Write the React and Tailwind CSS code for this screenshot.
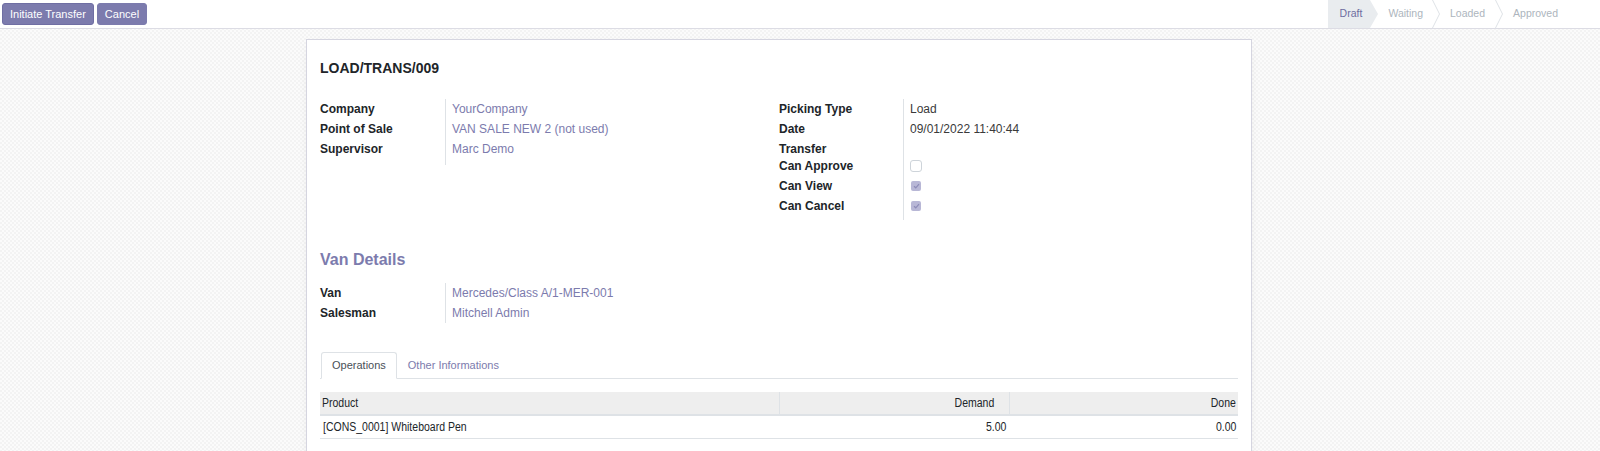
import React from "react";

const purple = "text-[#7c7bad]";

function Field({ label, children, h = "h-[20px]", labelW = "w-[125px]" }) {
  return (
    <div className={`flex ${h}`}>
      <div className={`${labelW} shrink-0 font-bold text-[12px] leading-[20px] text-[#212529]`}>{label}</div>
      <div className="pl-[6px] text-[12px] leading-[20px] border-l border-[#dee2e6] flex-1">{children}</div>
    </div>
  );
}

function CheckBox({ checked }) {
  if (!checked) {
    return <div className="mt-[4px] w-[12px] h-[12px] rounded-[3px] border border-[#ced4da] bg-white" />;
  }
  return (
    <div className="mt-[5px] ml-[1px] w-[10px] h-[10px] rounded-[2px] bg-[#b8b7d6] flex items-center justify-center">
      <svg width="7" height="6" viewBox="0 0 7 6">
        <path d="M1 3.2 L2.8 4.8 L6 1.2" fill="none" stroke="#8d8cb8" strokeWidth="1.2" />
      </svg>
    </div>
  );
}

function Narrow({ children, right }) {
  return (
    <span className={`inline-block scale-x-[0.84] ${right ? "origin-right" : "origin-left"}`}>{children}</span>
  );
}

function Chevron() {
  return (
    <svg className="shrink-0" width="8" height="28" viewBox="0 0 8 28">
      <path d="M0.5 0 L7.5 14 L0.5 28" fill="none" stroke="#dee2e6" />
    </svg>
  );
}

export default function App() {
  return (
    <div
      className="h-[451px] overflow-hidden bg-[#f7f7f7] bg-[repeating-conic-gradient(#f3f3f3_0_25%,#fbfbfb_0_50%)] bg-[length:4px_4px]"
      style={{ fontFamily: '"Liberation Sans", Arial, sans-serif' }}
    >
      {/* control panel */}
      <div className="flex justify-between h-[29px] bg-white border-b border-[#dcdce4]">
        <div className="flex gap-[3px] pl-[2px] pt-[3px]">
          <button className="h-[22px] px-[7px] rounded-[3px] bg-[#7c7bad] text-white text-[11px] leading-[20px] border border-[#6f6ea3]">
            Initiate Transfer
          </button>
          <button className="h-[22px] px-[7px] rounded-[3px] bg-[#7c7bad] text-white text-[11px] leading-[20px] border border-[#7c7bad]">
            Cancel
          </button>
        </div>
        <div className="flex h-[28px] text-[10.5px] pr-[42px]">
          <div className="flex items-center bg-[#e9ecef] pl-[12px] pr-[8px] text-[#6d6c9f]">Draft</div>
          <svg className="shrink-0" width="8" height="28" viewBox="0 0 8 28">
            <path d="M0 0 L8 14 L0 28 Z" fill="#e9ecef" />
          </svg>
          <div className="flex items-center pl-[10px] pr-[9px] text-[#adb5bd]">Waiting</div>
          <Chevron />
          <div className="flex items-center pl-[10px] pr-[10px] text-[#adb5bd]">Loaded</div>
          <Chevron />
          <div className="flex items-center pl-[10px] text-[#adb5bd]">Approved</div>
        </div>
      </div>

      {/* sheet */}
      <div className="ml-[306px] mt-[10px] w-[946px] bg-white border border-[#d5d5e0] shadow-[0_4px_12px_-6px_rgba(0,0,0,0.15)] px-[13px] pt-[20px] pb-[20px]">
        <div className="text-[14px] font-bold leading-[16px] text-[#212529]">LOAD/TRANS/009</div>

        <div className="flex mt-[23px]">
          <div className="w-[459px]">
            <Field label="Company"><span className={purple}>YourCompany</span></Field>
            <Field label="Point of Sale"><span className={purple}>VAN SALE NEW 2 (not used)</span></Field>
            <Field label="Supervisor" h="h-[26px]"><span className={purple}>Marc Demo</span></Field>
          </div>
          <div className="w-[459px]">
            <Field label="Picking Type" labelW="w-[124px]"><span className="text-[#3a3a3a]">Load</span></Field>
            <Field label="Date" labelW="w-[124px]"><span className="text-[#3a3a3a]">09/01/2022 11:40:44</span></Field>
            <Field label="Transfer" labelW="w-[124px]" h="h-[17px]"><span /></Field>
            <Field label="Can Approve" labelW="w-[124px]"><CheckBox checked={false} /></Field>
            <Field label="Can View" labelW="w-[124px]"><CheckBox checked /></Field>
            <Field label="Can Cancel" labelW="w-[124px]" h="h-[24px]"><CheckBox checked /></Field>
          </div>
        </div>

        <div className={`mt-[29px] text-[16px] font-bold leading-[22px] ${purple}`}>Van Details</div>

        <div className="mt-[12px] w-[459px]">
          <Field label="Van"><span className={purple}>Mercedes/Class A/1-MER-001</span></Field>
          <Field label="Salesman"><span className={purple}>Mitchell Admin</span></Field>
        </div>

        {/* tabs */}
        <div className="mt-[29px] flex border-b border-[#dee2e6] h-[27px]">
          <div className="ml-[1px] px-[10px] h-[27px] border border-[#dee2e6] border-b-white rounded-t-[3px] bg-white text-[11px] leading-[25px] text-[#495057]">
            Operations
          </div>
          <div className={`px-[11px] text-[11px] leading-[26px] ${purple}`}>Other Informations</div>
        </div>

        {/* table */}
        <div className="mt-[13px] text-[12.5px] text-[#212529]">
          <div className="flex h-[24px] bg-[#eeeeee] border-b-2 border-[#dee2e6]">
            <div className="w-[460px] pl-[2px] leading-[22px] border-r border-[#dee2e6]"><Narrow>Product</Narrow></div>
            <div className="w-[230px] pr-[15px] text-right leading-[22px] border-r border-[#dee2e6]"><Narrow right>Demand</Narrow></div>
            <div className="flex-1 pr-[2px] text-right leading-[22px]"><Narrow right>Done</Narrow></div>
          </div>
          <div className="flex h-[23px] border-b border-[#dee2e6]">
            <div className="w-[460px] pl-[3px] leading-[23px]"><Narrow>[CONS_0001] Whiteboard Pen</Narrow></div>
            <div className="w-[230px] pr-[4px] text-right leading-[23px]"><Narrow right>5.00</Narrow></div>
            <div className="flex-1 pr-[2px] text-right leading-[23px]"><Narrow right>0.00</Narrow></div>
          </div>
        </div>
      </div>
    </div>
  );
}
